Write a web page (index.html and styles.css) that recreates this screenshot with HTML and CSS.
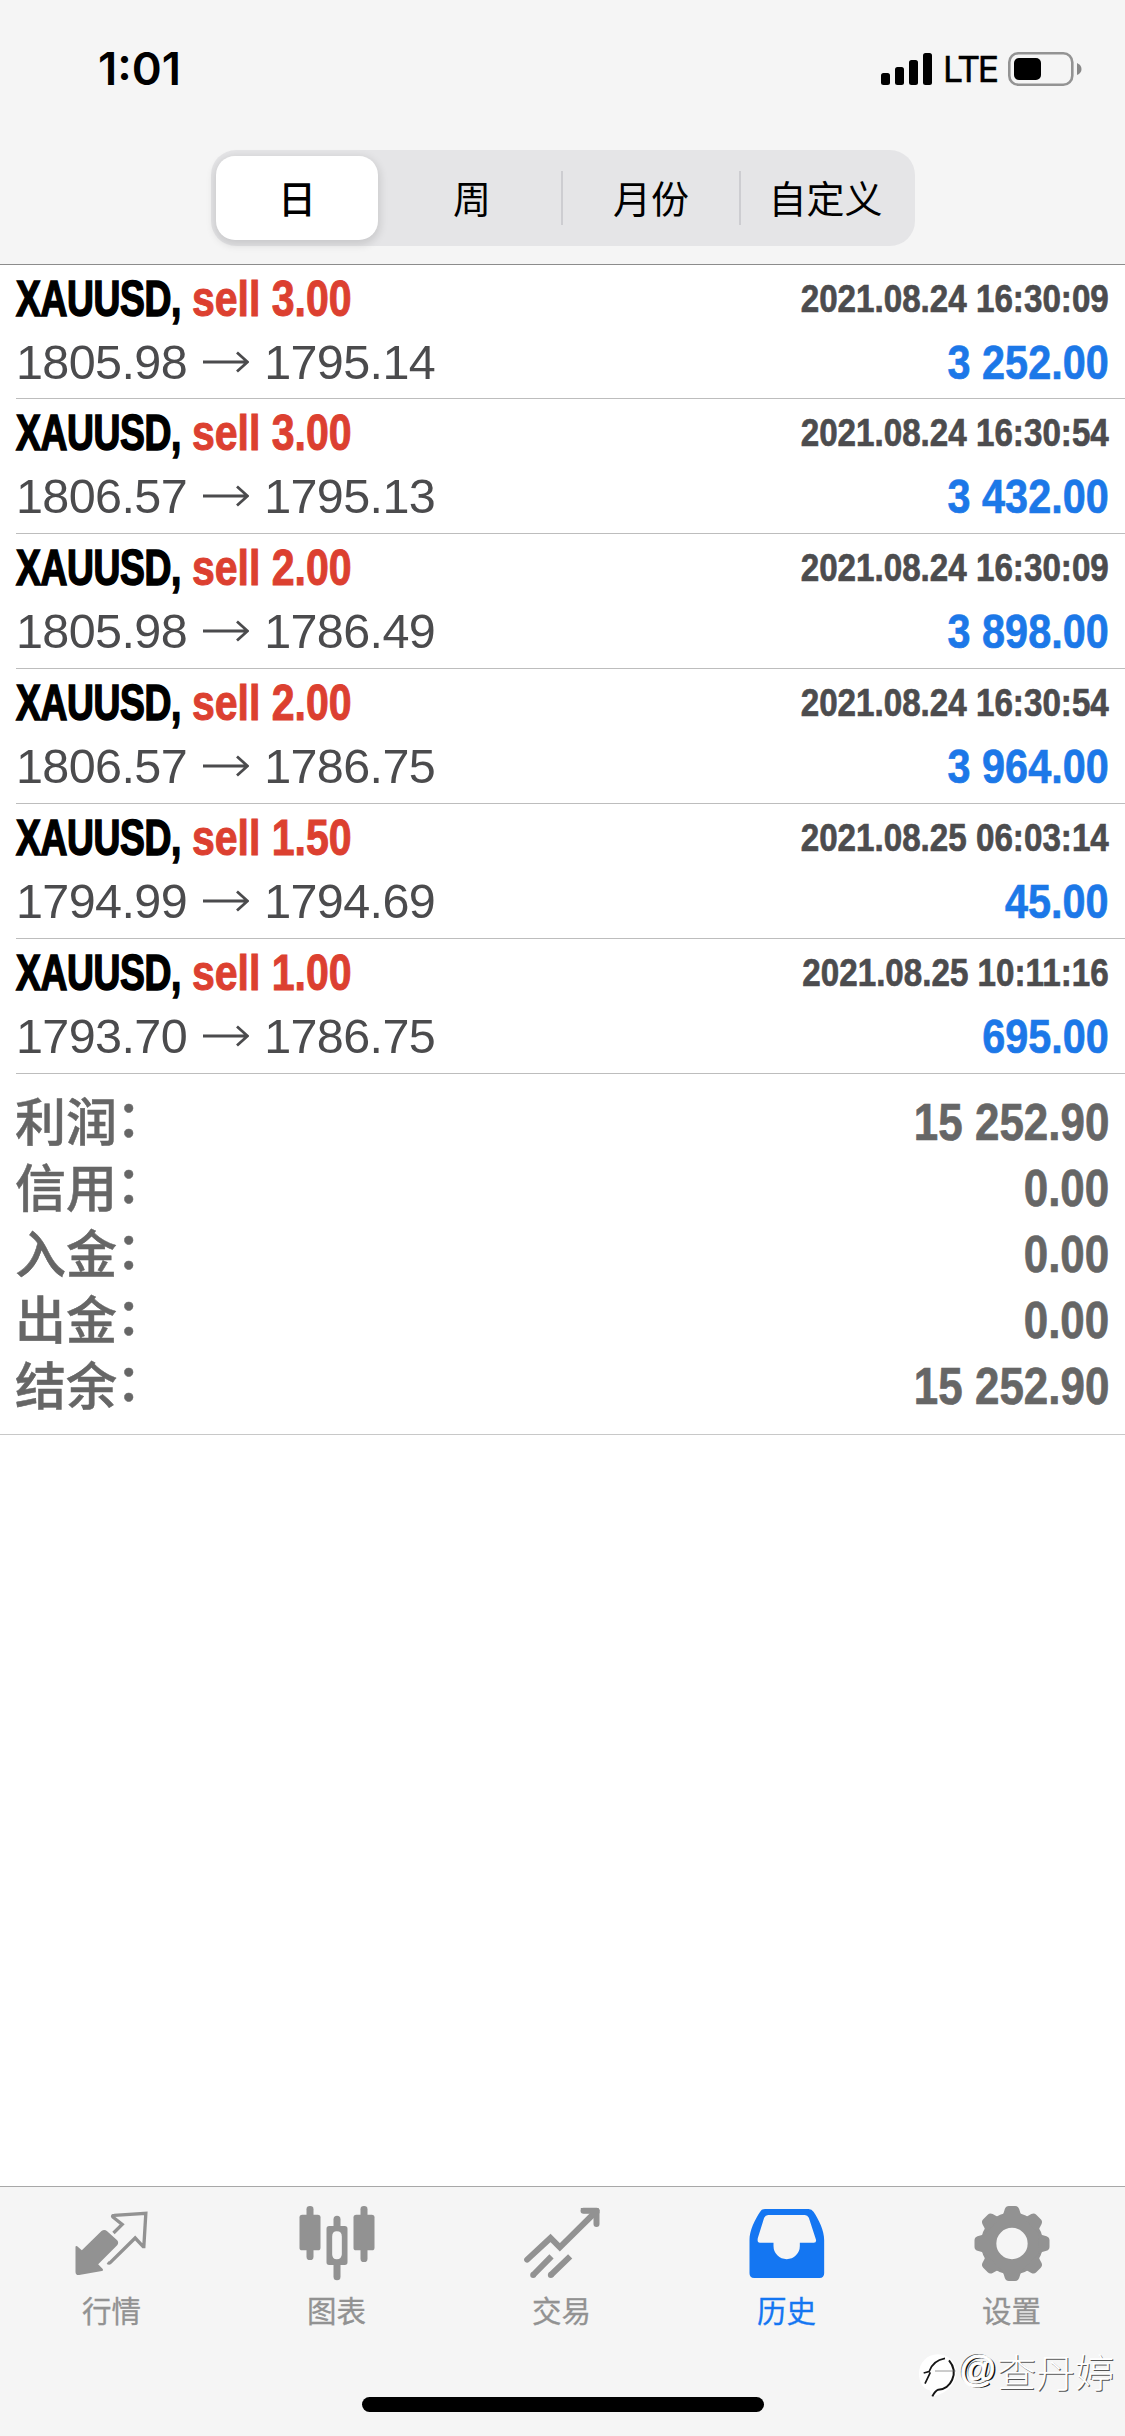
FILE: index.html
```html
<!DOCTYPE html>
<html lang="zh-CN">
<head>
<meta charset="utf-8">
<title>历史</title>
<link rel="stylesheet" href="styles.css">
</head>
<body>
<div class="screen">
  <header class="top">
    <div class="status">
      <span class="time">1:01</span>
      <div class="indicators">
        <svg class="signal" width="52" height="34" viewBox="0 0 52 34"><rect x="0" y="21" width="9" height="12" rx="2.500"/><rect x="14" y="15" width="9" height="18" rx="2.500"/><rect x="28" y="8" width="9" height="25" rx="2.500"/><rect x="42" y="1" width="9" height="32" rx="2.500"/></svg>
        <span class="lte">LTE</span>
        <svg class="battery" width="74" height="34" viewBox="0 0 74 34"><rect x="1.300" y="1.300" width="63" height="31.400" rx="9" fill="none" stroke="#939393" stroke-width="2.600"/><rect x="6" y="6" width="27" height="22" rx="5"/><path d="M69 11 Q73.500 13 73.500 17 T69 23 Z" fill="#888"/></svg>
      </div>
    </div>
    <nav class="segments">
      <span class="segment selected">日</span>
      <span class="segment">周</span>
      <span class="segment">月份</span>
      <span class="segment">自定义</span>
    </nav>
  </header>
  <main class="content">
    <div class="deals">
      <div class="deal"><div class="line"><span class="title"><span class="symbol">XAUUSD,</span><span class="side">sell 3.00</span></span><span class="date">2021.08.24 16:30:09</span></div><div class="line"><span class="prices">1805.98<svg class="arrow" viewBox="0 0 46 22"><path d="M0 11H44M34 1.500L44.500 11L34 20.500"/></svg>1795.14</span><span class="profit">3 252.00</span></div></div>
      <div class="deal"><div class="line"><span class="title"><span class="symbol">XAUUSD,</span><span class="side">sell 3.00</span></span><span class="date">2021.08.24 16:30:54</span></div><div class="line"><span class="prices">1806.57<svg class="arrow" viewBox="0 0 46 22"><path d="M0 11H44M34 1.500L44.500 11L34 20.500"/></svg>1795.13</span><span class="profit">3 432.00</span></div></div>
      <div class="deal"><div class="line"><span class="title"><span class="symbol">XAUUSD,</span><span class="side">sell 2.00</span></span><span class="date">2021.08.24 16:30:09</span></div><div class="line"><span class="prices">1805.98<svg class="arrow" viewBox="0 0 46 22"><path d="M0 11H44M34 1.500L44.500 11L34 20.500"/></svg>1786.49</span><span class="profit">3 898.00</span></div></div>
      <div class="deal"><div class="line"><span class="title"><span class="symbol">XAUUSD,</span><span class="side">sell 2.00</span></span><span class="date">2021.08.24 16:30:54</span></div><div class="line"><span class="prices">1806.57<svg class="arrow" viewBox="0 0 46 22"><path d="M0 11H44M34 1.500L44.500 11L34 20.500"/></svg>1786.75</span><span class="profit">3 964.00</span></div></div>
      <div class="deal"><div class="line"><span class="title"><span class="symbol">XAUUSD,</span><span class="side">sell 1.50</span></span><span class="date">2021.08.25 06:03:14</span></div><div class="line"><span class="prices">1794.99<svg class="arrow" viewBox="0 0 46 22"><path d="M0 11H44M34 1.500L44.500 11L34 20.500"/></svg>1794.69</span><span class="profit">45.00</span></div></div>
      <div class="deal"><div class="line"><span class="title"><span class="symbol">XAUUSD,</span><span class="side">sell 1.00</span></span><span class="date">2021.08.25 10:11:16</span></div><div class="line"><span class="prices">1793.70<svg class="arrow" viewBox="0 0 46 22"><path d="M0 11H44M34 1.500L44.500 11L34 20.500"/></svg>1786.75</span><span class="profit">695.00</span></div></div>
    </div>
    <div class="summary">
      <div class="total"><span class="label">利润<span class="colon">：</span></span><span class="sum">15 252.90</span></div>
      <div class="total"><span class="label">信用<span class="colon">：</span></span><span class="sum">0.00</span></div>
      <div class="total"><span class="label">入金<span class="colon">：</span></span><span class="sum">0.00</span></div>
      <div class="total"><span class="label">出金<span class="colon">：</span></span><span class="sum">0.00</span></div>
      <div class="total"><span class="label">结余<span class="colon">：</span></span><span class="sum">15 252.90</span></div>
    </div>
  </main>
  <footer class="bottom">
    <nav class="tabs">
      <div class="tab"><svg class="icon" viewBox="97.500 66 240 240"><path fill="currentColor" d="M105 200Q106 196 110 199L124 211L183 153Q192 147 200 154L230 181Q236 188 230 196L173 253L186 266Q190 271 184 273L116 285Q105 286 105 275Z"/><path fill="none" stroke="currentColor" stroke-width="10" d="M219 159L245 133L217 111Q214 106 221 106L316 100L310 200L308 200L284 174L209 248Q206 251 201 248"/></svg><span>行情</span></div>
      <div class="tab"><svg class="icon" viewBox="772.500 66 240 240"><g fill="currentColor"><rect x="777" y="104" width="63" height="107" rx="8"/><rect x="798" y="78" width="21" height="162" rx="10"/><rect x="939" y="104" width="63" height="107" rx="8"/><rect x="960" y="78" width="21" height="168" rx="10"/><path d="M879 145V118A10.500 10.500 0 0 1 900 118V145Z"/><path d="M879 250V290A10.500 10.500 0 0 0 900 290V250Z"/><path fill-rule="evenodd" d="M866 138H913Q921 138 921 146V247Q921 255 913 255H866Q858 255 858 247V146Q858 138 866 138ZM889 154Q875 154 875 170V223Q875 238 889 238T904 223V170Q904 154 889 154Z"/></g></svg><span>图表</span></div>
      <div class="tab"><svg class="icon" viewBox="127.500 66 240 240"><g fill="none" stroke="currentColor" stroke-width="18"><path stroke-linecap="round" d="M140 239L210 174L238 202L342 99"/><path stroke-linecap="round" stroke-linejoin="round" d="M309 92H348V132"/><path d="M213 229L158 285M269 229L211 285"/></g><g fill="currentColor"><path d="M300 84H350Q357 84 357 91V100H309Z"/><circle cx="158" cy="285" r="9"/><circle cx="211" cy="285" r="9"/></g></svg><span>交易</span></div>
      <div class="tab active"><svg class="icon" viewBox="802.500 66 240 240"><path fill="currentColor" fill-rule="evenodd" d="M854 87H984Q994 87 999 95C1015 119 1031 151 1031 180V280Q1031 294 1017 294H821Q807 294 807 280V180C807 151 823 119 839 95Q844 87 854 87ZM863 105Q855 105 851 113L832 174Q829 188 838 188H879V198A39.500 39.500 0 0 0 958 198V188H1000Q1009 188 1006 178L985 113Q981 105 973 105Z"/></svg><span>历史</span></div>
      <div class="tab"><svg class="icon" viewBox="277.500 66 240 240"><path fill="none" stroke="currentColor" stroke-width="46" d="M464.500 190.500A70 70 0 1 1 324.500 190.500A70 70 0 1 1 464.500 190.500"/><g fill="currentColor"><g id="pair"><path id="tooth" d="M357 112Q366 109 369 100L373 87Q376 78 385 78H404Q413 78 416 87L420 100Q423 109 432 112Z"/><use href="#tooth" transform="rotate(180 394.500 190.500)"/></g><use href="#pair" transform="rotate(45 394.500 190.500)"/><use href="#pair" transform="rotate(90 394.500 190.500)"/><use href="#pair" transform="rotate(135 394.500 190.500)"/></g></svg><span>设置</span></div>
    </nav>
    <div class="home"></div>
    <div class="watermark"><svg width="42" height="46" viewBox="0 0 126 138"><path fill="#fff" d="M62 10C30 10 6 36 6 68C6 94 18 112 38 118L48 136C90 128 118 98 118 60Q110 12 62 10Z"/><g fill="none" stroke="#161616"><path stroke-width="5" d="M20 66L36 62Q48 28 84 22M40 64L24 98"/><path stroke-width="6" d="M96 28C128 66 100 116 64 116Q54 120 46 136"/><path stroke-width="2" stroke="#666" d="M54 60H116"/></g></svg><span class="at">@</span><span>查丹婷</span></div>
  </footer>
</div>
</body>
</html>
```
FILE: styles.css
```css
* { box-sizing: border-box; }
body { margin: 0; background: #fff; font-family: "Liberation Sans", "Noto Sans CJK SC", sans-serif; }
.screen { width: 1125px; height: 2436px; display: flex; flex-direction: column; overflow: hidden; }
.top { height: 265px; background: #f5f5f5; border-bottom: 1px solid #8c8c8c; }
.status { height: 150px; padding: 52px 43px 0 98px; display: flex; justify-content: space-between; align-items: flex-start; }
.time { font: 600 45.500px/34px Inter, sans-serif; }
.indicators { display: flex; align-items: center; height: 34px; }
.lte { font: 400 35.500px/34px Inter, sans-serif; margin: 2px 10px 0 10px; width: 55px; letter-spacing: -2.400px; -webkit-text-stroke: .500px #000; }
.segments { width: 704px; height: 96px; margin-left: 211px; padding: 5px; border-radius: 25px; background: #e5e5e7; display: grid; grid-template-columns: 162px 183px 178px 171px; align-items: center; }
.segment { height: 54px; display: flex; align-items: center; justify-content: center; font: 400 38px/54px "Noto Sans CJK SC", sans-serif; padding-bottom: 3px; }
.segment:nth-child(2) { padding-left: 5px; }
.segment:nth-child(n+3) { border-left: 2px solid #cdcdd1; }
.selected { height: 84px; background: #fff; border-radius: 19px; font-weight: 500; box-shadow: 0 3px 9px 2px rgba(0,0,0,.12); }
.content { flex: 1; }
.deal { height: 135px; margin-left: 16px; padding-right: 16px; border-bottom: 1px solid #bdbdbd; }
.deals .deal:first-child { height: 134px; }
.line { display: flex; justify-content: space-between; height: 62px; line-height: 62px; }
.line:first-child { height: 66px; line-height: 66px; }
.title, .date, .profit, .sum { font-weight: 700; white-space: nowrap; -webkit-text-stroke: .700px currentColor; }
.title { display: flex; font-size: 50px; line-height: 68px; }
.symbol { width: 176px; transform: scaleX(.745); transform-origin: left; -webkit-text-stroke: 1.600px #000; letter-spacing: -.500px; }
.side { transform: scaleX(.82); transform-origin: left; color: #dc4030; -webkit-text-stroke: 1px #dc4030; }
.date { font-size: 39.500px; color: #4c4c4e; transform: scaleX(.84); transform-origin: right; }
.prices { font-size: 48.500px; letter-spacing: -.600px; color: #4b4b4d; display: flex; align-items: center; }
.arrow { width: 46px; height: 22px; margin: 0 15px 0 16px; fill: none; stroke: #4b4b4d; stroke-width: 2.800px; }
.profit { font-size: 49px; color: #1c78e8; transform: scaleX(.845); transform-origin: right; }
.summary { padding: 15px 16px; height: 361px; border-bottom: 1px solid #c8c8c8; color: #666; }
.total { height: 66px; line-height: 66px; display: flex; justify-content: space-between; }
.label { display: flex; font: 500 51px/60px "Noto Sans CJK SC", sans-serif; margin-left: -1px; -webkit-text-stroke: .500px currentColor; }
.colon { margin: -4px 0 0 -1px; }
.sum { font-size: 52px; transform: scaleX(.845); transform-origin: right; }
.bottom { height: 250px; background: #f5f5f5; border-top: 1px solid #a8a8a8; position: relative; }
.tabs { display: grid; grid-template-columns: repeat(5, 225px); padding-top: 15px; color: #929292; }
.tab { display: flex; flex-direction: column; align-items: center; font: 400 29.500px/40px "Noto Sans CJK SC", sans-serif; }
.tab span { margin: 7px 2px 2px 0; -webkit-text-stroke: .300px currentColor; }
.icon { width: 80px; height: 80px; }
.active { color: #1476f2; }
.home { width: 402px; height: 15px; border-radius: 8px; background: #000; margin: 66px auto 0; }
.watermark { position: absolute; left: 917px; top: 163px; display: flex; align-items: center; color: #fff; font: 300 39px/40px "Noto Sans CJK SC", sans-serif; text-shadow: 1px 1px 0 #555; }
.watermark span { margin-bottom: 8px; }
.watermark .at { width: 38px; font: 400 37px/40px "Liberation Sans", sans-serif; -webkit-text-stroke: 1px #fff; text-shadow: 2px 1px 0 #111, -1px -1px 0 #555; }
```
